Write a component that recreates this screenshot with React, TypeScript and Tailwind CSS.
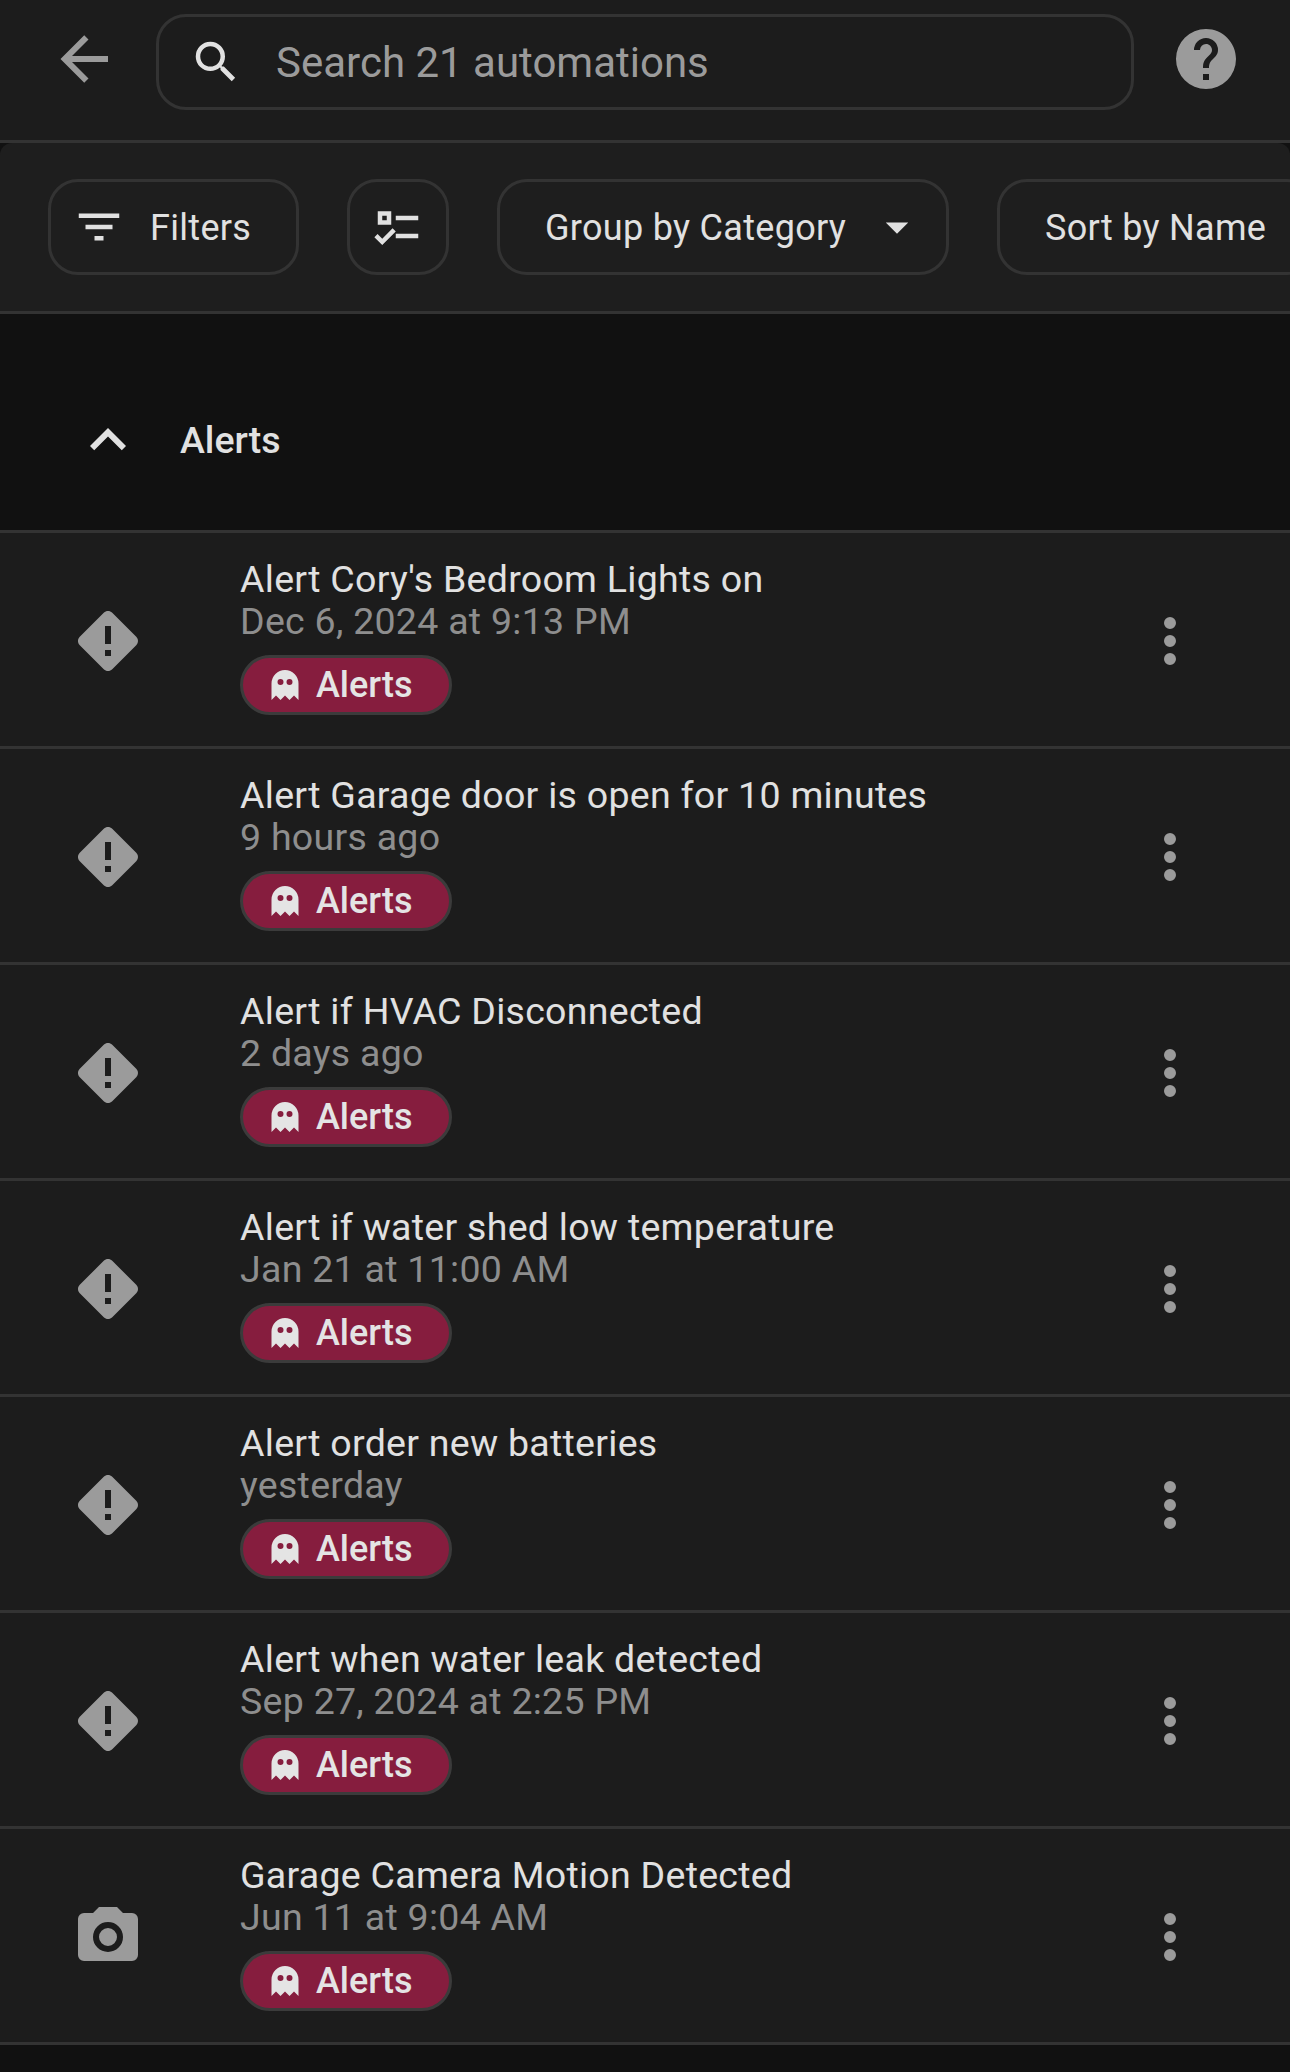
const mdi = {
  arrowLeft: 'M20,11V13H8L13.5,18.5L12.08,19.92L4.16,12L12.08,4.08L13.5,5.5L8,11H20Z',
  magnify:
    'M9.5,3A6.5,6.5 0 0,1 16,9.5C16,11.11 15.41,12.59 14.44,13.73L14.71,14H15.5L20.5,19L19,20.5L14,15.5V14.71L13.73,14.44C12.59,15.41 11.11,16 9.5,16A6.5,6.5 0 0,1 3,9.5A6.5,6.5 0 0,1 9.5,3M9.5,5C7,5 5,7 5,9.5C5,12 7,14 9.5,14C12,14 14,12 14,9.5C14,7 12,5 9.5,5Z',
  help: 'M15.07,11.25L14.17,12.17C13.45,12.89 13,13.5 13,15H11V14.5C11,13.39 11.45,12.39 12.17,11.67L13.41,10.41C13.78,10.05 14,9.55 14,9C14,7.89 13.1,7 12,7A2,2 0 0,0 10,9H8A4,4 0 0,1 12,5A4,4 0 0,1 16,9C16,9.88 15.64,10.67 15.07,11.25M13,19H11V17H13M12,2A10,10 0 0,0 2,12A10,10 0 0,0 12,22A10,10 0 0,0 22,12C22,6.47 17.5,2 12,2Z',
  filter: 'M6,13H18V11H6M3,6V8H21V6M10,18H14V16H10V18Z',
  listChecks:
    'M3,5H9V11H3V5M5,7V9H7V7H5M11,7H21V9H11V7M11,15H21V17H11V15M5,20L1.5,16.5L2.91,15.09L5,17.17L9.59,12.59L11,14L5,20Z',
  menuDown: 'M7,10L12,15L17,10H7Z',
  chevronUp: 'M7.41,15.41L12,10.83L16.59,15.41L18,14L12,8L6,14L7.41,15.41Z',
  alert:
    'M12 2C11.5 2 11 2.19 10.59 2.59L2.59 10.59C1.8 11.37 1.8 12.63 2.59 13.41L10.59 21.41C11.37 22.2 12.63 22.2 13.41 21.41L21.41 13.41C22.2 12.63 22.2 11.37 21.41 10.59L13.41 2.59C13 2.19 12.5 2 12 2M11 7H13V13H11V7M11 15H13V17H11V15Z',
  camera:
    'M4,4H7L9,2H15L17,4H20A2,2 0 0,1 22,6V18A2,2 0 0,1 20,20H4A2,2 0 0,1 2,18V6A2,2 0 0,1 4,4M12,7A5,5 0 0,0 7,12A5,5 0 0,0 12,17A5,5 0 0,0 17,12A5,5 0 0,0 12,7M12,9A3,3 0 0,1 15,12A3,3 0 0,1 12,15A3,3 0 0,1 9,12A3,3 0 0,1 12,9Z',
  dots: 'M12,16A2,2 0 0,1 14,18A2,2 0 0,1 12,20A2,2 0 0,1 10,18A2,2 0 0,1 12,16M12,10A2,2 0 0,1 14,12A2,2 0 0,1 12,14A2,2 0 0,1 10,12A2,2 0 0,1 12,10M12,4A2,2 0 0,1 14,6A2,2 0 0,1 12,8A2,2 0 0,1 10,6A2,2 0 0,1 12,4Z',
  ghost:
    'M12,2A9,9 0 0,0 3,11V22L6,19L9,22L12,19L15,22L18,19L21,22V11A9,9 0 0,0 12,2M9,8A2,2 0 0,1 11,10A2,2 0 0,1 9,12A2,2 0 0,1 7,10A2,2 0 0,1 9,8M15,8A2,2 0 0,1 17,10A2,2 0 0,1 15,12A2,2 0 0,1 13,10A2,2 0 0,1 15,8Z',
};

function Icon({ path, className }: { path: string; className: string }) {
  return (
    <svg viewBox="0 0 24 24" className={className} fill="currentColor">
      <path d={path} />
    </svg>
  );
}

const automations = [
  { name: "Alert Cory's Bedroom Lights on", time: 'Dec 6, 2024 at 9:13 PM', icon: mdi.alert },
  { name: 'Alert Garage door is open for 10 minutes', time: '9 hours ago', icon: mdi.alert },
  { name: 'Alert if HVAC Disconnected', time: '2 days ago', icon: mdi.alert },
  { name: 'Alert if water shed low temperature', time: 'Jan 21 at 11:00 AM', icon: mdi.alert },
  { name: 'Alert order new batteries', time: 'yesterday', icon: mdi.alert },
  { name: 'Alert when water leak detected', time: 'Sep 27, 2024 at 2:25 PM', icon: mdi.alert },
  { name: 'Garage Camera Motion Detected', time: 'Jun 11 at 9:04 AM', icon: mdi.camera },
];

function AutomationRow({ name, time, icon }: { name: string; time: string; icon: string }) {
  return (
    <div className="flex h-[216px] items-center border-t-[3px] border-[#333333] bg-[#1c1c1c]">
      <Icon path={icon} className="ml-[72px] mt-[2px] h-[72px] w-[72px] shrink-0 text-[#9b9b9b]" />
      <div className="ml-[96px] min-w-0 flex-1 pb-[8px]">
        <div className="pt-[2px] text-[37.5px] leading-[41px] tracking-[0.28px] text-[#e1e1e1]">{name}</div>
        <div className="text-[37.5px] leading-[43px] tracking-[0.28px] text-[#8e8e8e]">{time}</div>
        <div className="mt-[12px] flex h-[60px] w-[212px] items-center rounded-full border-[3px] border-[#3b3b3b] bg-[#861d3e] pl-[24px] text-[36px] font-medium text-[#e4e4e4]">
          <Icon path={mdi.ghost} className="h-[36px] w-[36px] shrink-0" />
          <span className="ml-[13px]">Alerts</span>
        </div>
      </div>
      <Icon path={mdi.dots} className="mr-[84px] mt-[2px] h-[72px] w-[72px] shrink-0 text-[#9b9b9b]" />
    </div>
  );
}

export default function App() {
  return (
    <div className="h-[2072px] w-[1290px] overflow-hidden bg-[#111111] font-['Roboto',sans-serif]">
      <div className="flex h-[143px] items-start border-b-[3px] border-[#333333] bg-[#1c1c1c]">
        <Icon path={mdi.arrowLeft} className="ml-[48px] mt-[23px] h-[72px] w-[72px] shrink-0 text-[#9b9b9b]" />
        <div className="ml-[36px] mt-[14px] flex h-[96px] w-[978px] items-center rounded-[30px] border-[3px] border-[#333333] pl-[30px]">
          <Icon path={mdi.magnify} className="h-[54px] w-[54px] shrink-0 text-[#e1e1e1]" />
          <span className="ml-[33px] text-[42px] text-[#9b9b9b]">Search 21 automations</span>
        </div>
        <Icon path={mdi.help} className="ml-[36px] mt-[23px] h-[72px] w-[72px] shrink-0 text-[#9b9b9b]" />
      </div>

      <div className="flex h-[171px] items-center gap-[48px] overflow-hidden rounded-t-[12px] border-b-[3px] border-[#333333] bg-[#1e1e1e] pl-[48px] text-[36px] tracking-[0.3px] text-[#e1e1e1]">
        <div className="flex h-[96px] w-[251px] shrink-0 items-center rounded-[30px] border-[3px] border-[#333333] pl-[21px]">
          <Icon path={mdi.filter} className="h-[54px] w-[54px] shrink-0" />
          <span className="ml-[24px] pt-[2px]">Filters</span>
        </div>
        <div className="flex h-[96px] w-[102px] shrink-0 items-center justify-center rounded-[30px] border-[3px] border-[#333333]">
          <Icon path={mdi.listChecks} className="h-[54px] w-[54px] shrink-0" />
        </div>
        <div className="flex h-[96px] w-[452px] shrink-0 items-center rounded-[30px] border-[3px] border-[#333333] pl-[45px]">
          <span className="pt-[2px]">Group by Category</span>
          <Icon path={mdi.menuDown} className="ml-[24px] h-[54px] w-[54px] shrink-0" />
        </div>
        <div className="flex h-[96px] w-[320px] shrink-0 items-center rounded-[30px] border-[3px] border-[#333333] pl-[45px]">
          <span className="pt-[2px]">Sort by Name</span>
        </div>
      </div>

      <div className="flex h-[216px] items-center bg-[#111111] pt-[36px]">
        <Icon path={mdi.chevronUp} className="ml-[72px] h-[72px] w-[72px] shrink-0 text-[#e1e1e1]" />
        <span className="ml-[36px] text-[37.5px] font-medium text-[#e1e1e1]">Alerts</span>
      </div>

      {automations.map((item) => (
        <AutomationRow key={item.name} {...item} />
      ))}
      <div className="border-t-[3px] border-[#333333]" />
    </div>
  );
}
